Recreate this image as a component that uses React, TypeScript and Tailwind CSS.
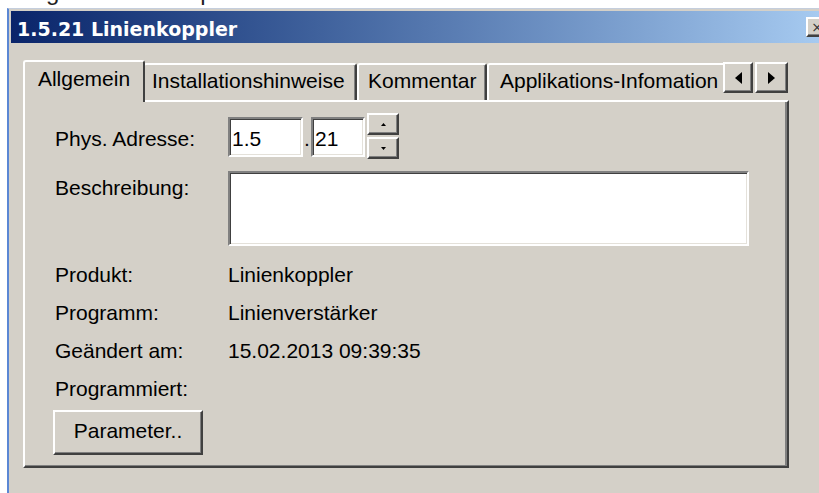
import React from "react";

const UI_FONT = "font-['Liberation_Sans','Arial',sans-serif]";

const RAISED =
  "border-2 border-t-white border-l-white border-r-[#404040] border-b-[#404040] shadow-[inset_-1px_-1px_0_#808080] bg-[#d4d0c8]";

const SUNKEN =
  "border-2 border-t-[#808080] border-l-[#808080] border-r-white border-b-white shadow-[inset_1px_1px_0_#404040,inset_-1px_-1px_0_#e4e1da] bg-white";

type Dir = "up" | "down" | "left" | "right";

function Arrow({ dir, w, h }: { dir: Dir; w: number; h: number }) {
  const pts: Record<Dir, string> = {
    up: `0,${h} ${w / 2},0 ${w},${h}`,
    down: `0,0 ${w},0 ${w / 2},${h}`,
    left: `${w},0 ${w},${h} 0,${h / 2}`,
    right: `0,0 ${w},${h / 2} 0,${h}`,
  };
  return (
    <svg width={w} height={h} viewBox={`0 0 ${w} ${h}`} className="block">
      <polygon points={pts[dir]} fill="#000" />
    </svg>
  );
}

function Field({ className, value }: { className: string; value?: string }) {
  return (
    <div className={`${SUNKEN} ${className} flex items-center pl-[2px] pt-[3px] leading-[24px]`}>
      {value}
    </div>
  );
}

function InfoRow({ label, value }: { label: string; value?: string }) {
  return (
    <div className="flex h-[38px] leading-[38px]">
      <div className="w-[173px]">{label}</div>
      <div>{value}</div>
    </div>
  );
}

const TAB =
  "mt-[3px] h-[37px] shrink-0 border-t-2 border-l-2 border-r-2 border-t-white border-l-white border-r-[#404040] rounded-t-[3px] pt-[4px] leading-[24px] whitespace-nowrap";

export default function App() {
  return (
    <div
      className={`w-[819px] h-[493px] overflow-hidden bg-white flex flex-col ${UI_FONT} text-[21px] text-black`}
    >
      {/* bottom edge of the text line above the dialog */}
      <div className="h-[8px] shrink-0 overflow-hidden flex text-[24px]">
        <span className="ml-[46px] mt-[-20px] leading-[24px] text-[#222]">g</span>
        <span className="ml-[141px] mt-[-20px] leading-[24px] text-[#222]">p</span>
      </div>

      {/* dialog window */}
      <div className="flex-1 ml-[7px] border-l-2 border-l-[#5b87d4] border-t border-t-[#c4cedd] bg-[#d4d0c8] flex flex-col pt-[2px]">
        {/* caption bar */}
        <div className="ml-[2px] h-[32px] shrink-0 pt-[4px] flex items-center overflow-hidden bg-linear-to-r from-[#0a246a] to-[#a6caf0]">
          <span className="pl-[6px] font-['DejaVu_Sans',sans-serif] font-bold text-[19px] leading-[22px] text-white">
            1.5.21 Linienkoppler
          </span>
          <div
            className={`ml-auto mr-[-9px] self-start mt-[2px] w-[22px] h-[20px] ${RAISED} flex items-center justify-center font-['DejaVu_Sans',sans-serif] text-[14px] leading-[14px] text-[#333]`}
          >
            ×
          </div>
        </div>

        {/* tab control */}
        <div className="ml-[14px] mt-[17px] w-[766px] flex flex-col">
          <div className="h-[40px] flex">
            <div className="relative z-10 w-[700px] h-[42px] -mb-[2px] flex items-start overflow-hidden">
              <div className="w-[122px] h-[42px] shrink-0 border-t-2 border-l-2 border-r-2 border-t-white border-l-white border-r-[#404040] rounded-t-[3px] bg-[#d4d0c8] pt-[5px] leading-[24px] text-center">
                Allgemein
              </div>
              <div className={`relative -z-10 -ml-[2px] w-[214px] pl-[7px] shadow-[inset_-1px_0_0_#808080] ${TAB}`}>
                Installationshinweise
              </div>
              <div className={`w-[130px] pl-[9px] shadow-[inset_-1px_0_0_#808080] ${TAB}`}>
                Kommentar
              </div>
              <div className={`w-[260px] pl-[11px] ${TAB}`}>Applikations-Infomation</div>
            </div>
            <div className="mt-[2px] flex gap-[2px] items-start">
              <div className={`w-[30px] h-[31px] ${RAISED} flex items-center justify-center`}>
                <Arrow dir="left" w={7} h={12} />
              </div>
              <div className={`w-[33px] h-[31px] ${RAISED} flex items-center justify-center`}>
                <Arrow dir="right" w={7} h={12} />
              </div>
            </div>
          </div>

          {/* page: Allgemein */}
          <div className="border-2 border-t-white border-l-white border-r-[#404040] border-b-[#404040] shadow-[inset_-2px_-1px_0_#808080] pl-[30px] pt-[11px] pb-[11px]">
            <div className="flex h-[46px]">
              <div className="w-[173px] mt-[6px] leading-[40px]">Phys. Adresse:</div>
              <div className="flex items-start">
                <Field className="w-[75px] h-[40px] mt-[4px]" value="1.5" />
                <span className="w-[8px] mt-[6px] leading-[40px] text-center">.</span>
                <Field className="w-[54px] h-[40px] mt-[4px]" value="21" />
                <div className="ml-[2px] flex flex-col gap-[2px]">
                  <div className={`w-[32px] h-[22px] ${RAISED} flex items-center justify-center`}>
                    <Arrow dir="up" w={5} h={3} />
                  </div>
                  <div className={`w-[32px] h-[22px] ${RAISED} flex items-center justify-center`}>
                    <Arrow dir="down" w={5} h={3} />
                  </div>
                </div>
              </div>
            </div>

            <div className="flex mt-[12px]">
              <div className="w-[173px] pt-[2px] leading-[30px]">Beschreibung:</div>
              <Field className="w-[521px] h-[75px]" />
            </div>

            <div className="mt-[10px] flex flex-col">
              <InfoRow label="Produkt:" value="Linienkoppler" />
              <InfoRow label="Programm:" value="Linienverstärker" />
              <InfoRow label="Geändert am:" value="15.02.2013 09:39:35" />
              <InfoRow label="Programmiert:" />
            </div>

            <div
              className={`mt-[2px] -ml-[2px] w-[150px] h-[45px] ${RAISED} flex items-center justify-center pb-[4px] leading-[24px]`}
            >
              Parameter..
            </div>
          </div>
        </div>
      </div>
    </div>
  );
}
